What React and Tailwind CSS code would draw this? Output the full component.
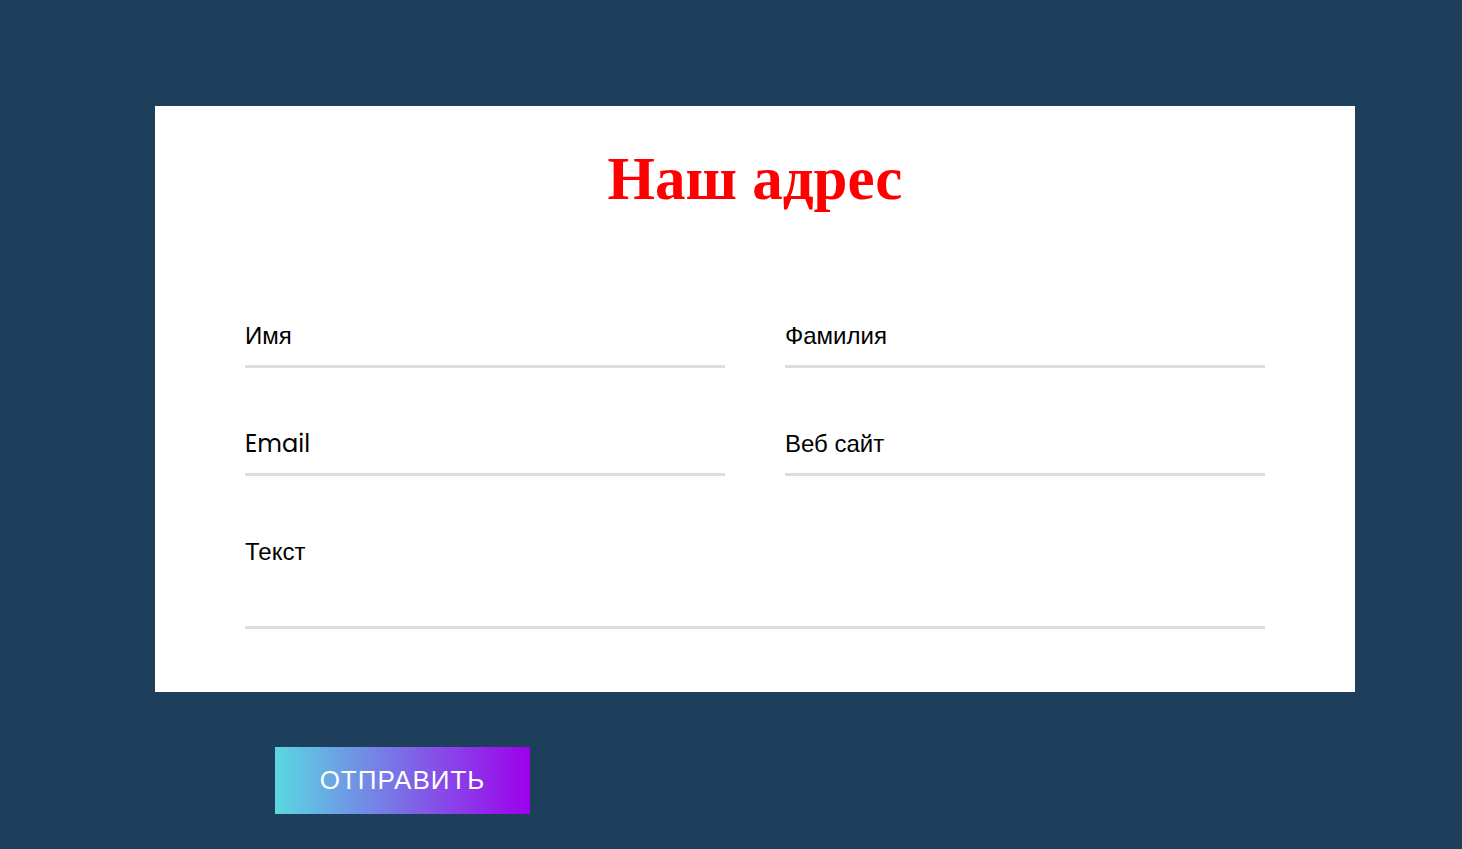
export default function App() {
  const label = "block text-[24px] leading-[28px] text-black";
  const sans = { fontFamily: '"Liberation Sans", Arial, sans-serif' };
  const field = "border-b-[3px] border-[#dddddd] pt-[2px] pb-[15px]";
  return (
    <div className="min-h-[849px] w-full bg-[#1e3f5b] pt-[106px] pb-[36px]" style={sans}>
      <div className="ml-[155px] w-[1200px] bg-white px-[90px] pt-[37px] pb-[63px]">
        <h1
          className="text-center text-[61px] leading-[72px] font-bold text-[#ff0000]"
          style={{ fontFamily: '"Liberation Serif", "Times New Roman", serif' }}
        >
          Наш адрес
        </h1>
        <div className="mt-[105px] grid grid-cols-2 gap-x-[60px] gap-y-[60px]">
          <div className={field}>
            <span className={label}>Имя</span>
          </div>
          <div className={field}>
            <span className={label}>Фамилия</span>
          </div>
          <div className={field}>
            <span className={label} style={{ fontFamily: 'Poppins, "Liberation Sans", sans-serif' }}>Email</span>
          </div>
          <div className={field}>
            <span className={label}>Веб сайт</span>
          </div>
          <div className="col-span-2 border-b-[3px] border-[#dddddd] pt-[2px] pb-[60px]">
            <span className={label}>Текст</span>
          </div>
        </div>
      </div>
      <button className="ml-[275px] mt-[55px] flex h-[67px] w-[255px] items-center justify-center bg-linear-to-r/srgb from-[#5ad8e1] to-[#9e00ec] text-[26px] tracking-[1px] text-white">
        ОТПРАВИТЬ
      </button>
    </div>
  );
}
